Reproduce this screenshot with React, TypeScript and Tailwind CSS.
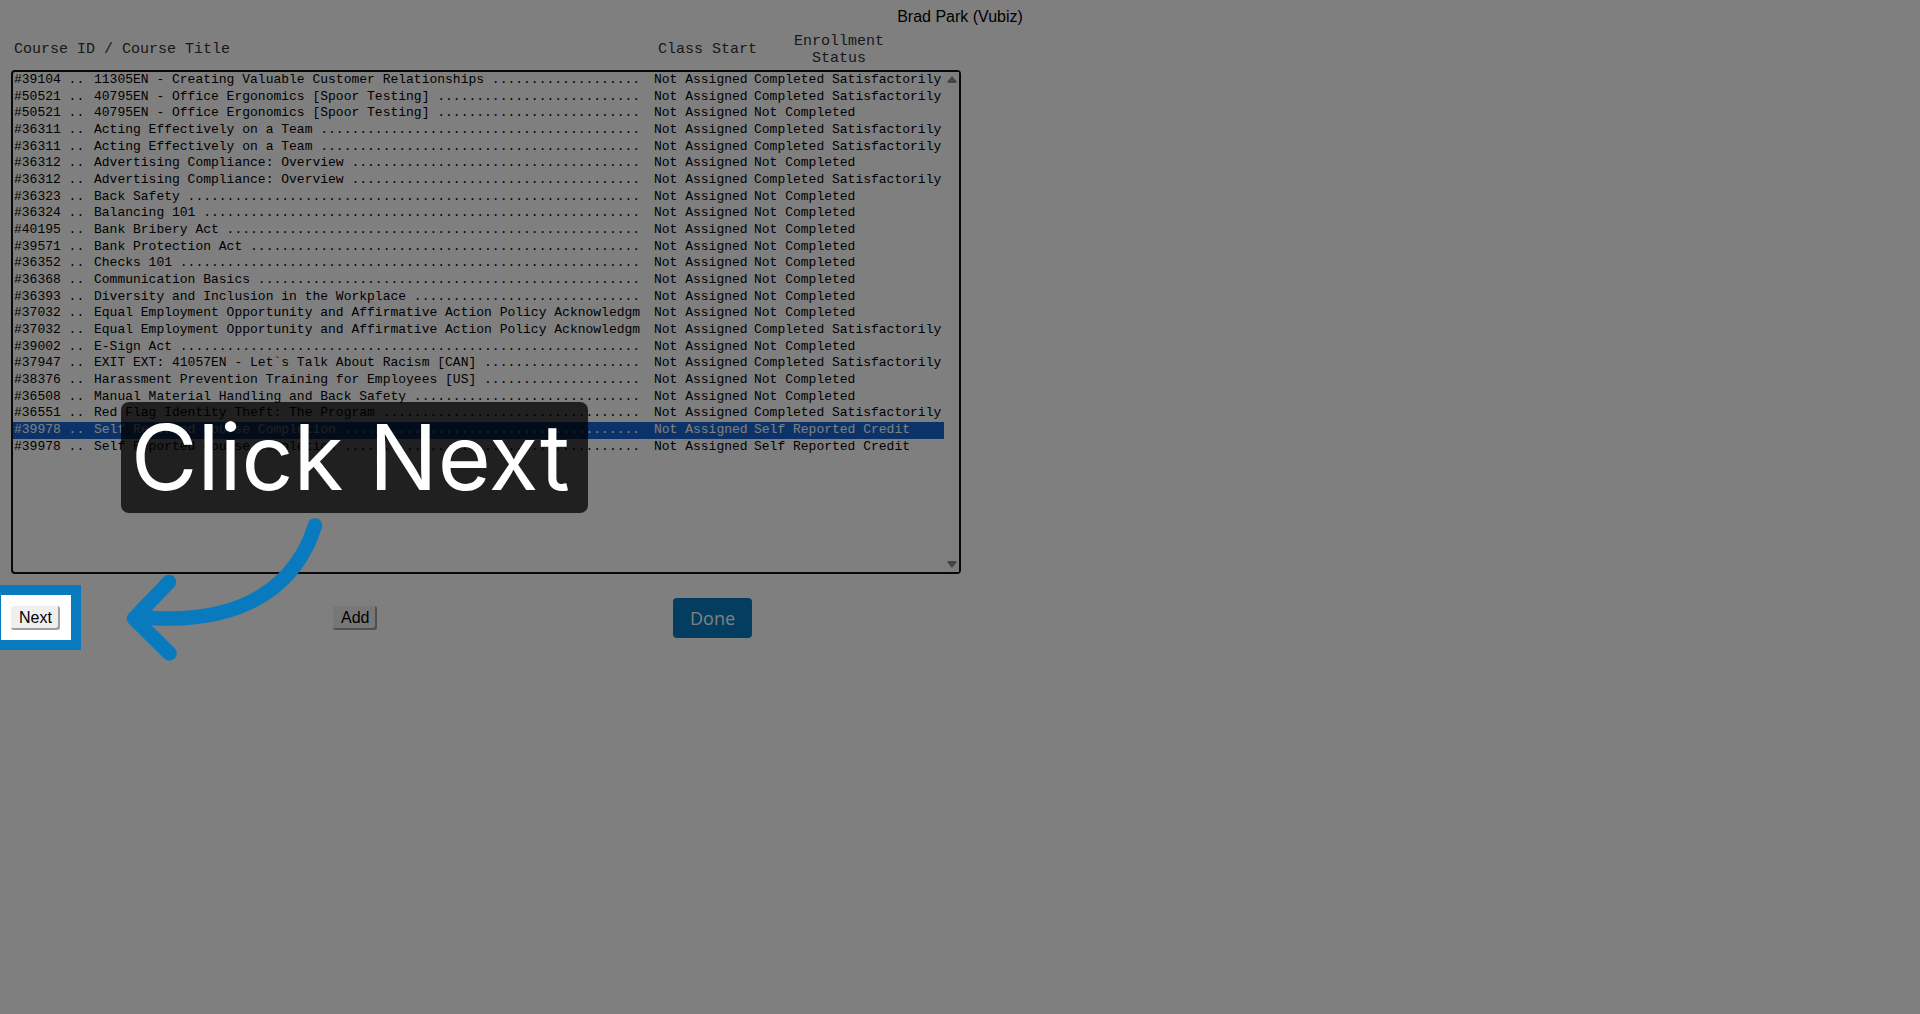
import React from 'react';

interface Course {
  id: string;
  title: string;
  status: string;
}

const DONE = 'Completed Satisfactorily';
const OPEN = 'Not Completed';
const SELF = 'Self Reported Credit';

const TITLE_WIDTH = 70;
const SELECTED_ROW = 21;

const courses: Course[] = [
  { id: '39104', title: '11305EN - Creating Valuable Customer Relationships', status: DONE },
  { id: '50521', title: '40795EN - Office Ergonomics [Spoor Testing]', status: DONE },
  { id: '50521', title: '40795EN - Office Ergonomics [Spoor Testing]', status: OPEN },
  { id: '36311', title: 'Acting Effectively on a Team', status: DONE },
  { id: '36311', title: 'Acting Effectively on a Team', status: DONE },
  { id: '36312', title: 'Advertising Compliance: Overview', status: OPEN },
  { id: '36312', title: 'Advertising Compliance: Overview', status: DONE },
  { id: '36323', title: 'Back Safety', status: OPEN },
  { id: '36324', title: 'Balancing 101', status: OPEN },
  { id: '40195', title: 'Bank Bribery Act', status: OPEN },
  { id: '39571', title: 'Bank Protection Act', status: OPEN },
  { id: '36352', title: 'Checks 101', status: OPEN },
  { id: '36368', title: 'Communication Basics', status: OPEN },
  { id: '36393', title: 'Diversity and Inclusion in the Workplace', status: OPEN },
  { id: '37032', title: 'Equal Employment Opportunity and Affirmative Action Policy Acknowledgm', status: OPEN },
  { id: '37032', title: 'Equal Employment Opportunity and Affirmative Action Policy Acknowledgm', status: DONE },
  { id: '39002', title: 'E-Sign Act', status: OPEN },
  { id: '37947', title: 'EXIT EXT: 41057EN - Let`s Talk About Racism [CAN]', status: DONE },
  { id: '38376', title: 'Harassment Prevention Training for Employees [US]', status: OPEN },
  { id: '36508', title: 'Manual Material Handling and Back Safety', status: OPEN },
  { id: '36551', title: 'Red Flag Identity Theft: The Program', status: DONE },
  { id: '39978', title: 'Self Reported Course Completion', status: SELF },
  { id: '39978', title: 'Self Reported Course Completion', status: SELF },
];

// Fill the title column with a dotted leader
const withLeader = (title: string) => `${title} `.padEnd(TITLE_WIDTH, '.').slice(0, TITLE_WIDTH);

const courseLine = ({ id, title, status }: Course) =>
  [`#${id} ..`, withLeader(title), 'Not Assigned', status].join('\t');

const CourseList: React.FC = () => (
  <div className="flex h-[504px] rounded-[4px] border-2 border-[#101010] bg-white">
    <select
      id="courses"
      size={30}
      defaultValue={SELECTED_ROW}
      className="min-w-0 flex-1 appearance-none overflow-hidden border-0 p-0 font-['Liberation_Mono',monospace] text-[13px] text-black outline-none"
    >
      {courses.map((course, i) => (
        <option
          key={i}
          value={i}
          label={courseLine(course)}
          className="min-h-0 p-0 pb-0.5 pl-px whitespace-pre [tab-size:20px] checked:bg-[#1967d2] checked:text-white nth-[3n+2]:pb-px"
        />
      ))}
    </select>
    <div className="flex w-[15px] flex-col items-center justify-between bg-[#fcfcfc] py-1 text-[#8b8b8b]">
      <svg width="10" height="7" viewBox="0 0 10 7" fill="currentColor">
        <path d="M5 0L9.4 5.2Q10 7 8.6 7H1.4Q0 7 .6 5.2Z" />
      </svg>
      <svg width="10" height="7" viewBox="0 0 10 7" fill="currentColor">
        <path d="M5 7L9.4 1.8Q10 0 8.6 0H1.4Q0 0 .6 1.8Z" />
      </svg>
    </div>
  </div>
);

const smallButton =
  'h-6 rounded-[3px] bg-[#efefef] px-2 text-base leading-6 text-black shadow-[inset_-2px_-2px_0_#a0a0a0]';

export default function App() {
  return (
    <div className="relative min-h-screen overflow-hidden bg-white font-['Liberation_Sans',Arial,sans-serif] text-black">
      <header className="pt-[5px] text-center text-base leading-6">Brad Park (Vubiz)</header>

      <main className="ml-[11px] w-[950px]">
        <div className="grid h-[41px] grid-cols-[644px_100px_162px] items-center pl-[3px] font-['Liberation_Mono',monospace] text-[15px] leading-[17px] text-[#333]">
          <label htmlFor="courses">Course ID / Course Title</label>
          <span>Class Start</span>
          <span className="text-center">
            Enrollment
            <br />
            Status
          </span>
        </div>

        <CourseList />

        <div className="mt-6 grid grid-cols-[322px_340px_auto] items-center justify-start">
          {/* Highlighted step: the ring's shadow dims the rest of the page */}
          <div className="relative flex">
            <button type="button" className={smallButton}>Next</button>
            <div className="pointer-events-none absolute -top-[21px] -left-5 z-10 h-[65px] w-[90px] border-10 border-[#0a7abf] shadow-[0_0_0_3000px_rgba(0,0,0,0.5)]"></div>
          </div>
          <div className="flex">
            <button type="button" className={smallButton}>Add</button>
          </div>
          <button
            type="button"
            className="h-10 rounded-[4px] bg-[#077dc2] px-[17px] font-['Open_Sans',sans-serif] text-lg leading-6 text-white"
          >
            Done
          </button>
        </div>
      </main>

      {/* Step callout */}
      <div className="absolute top-[402px] left-[121px] z-20 rounded-lg bg-black/75 pr-[18px] pl-2.5 font-['Inter',sans-serif] text-[91px] leading-[111px] whitespace-nowrap text-white">
        Click Next
      </div>
      <svg
        className="pointer-events-none absolute top-[510px] left-[120px] z-20"
        width="210"
        height="155"
        viewBox="120 510 210 155"
        fill="none"
        stroke="#0a7abf"
        strokeWidth="14.5"
        strokeLinecap="round"
        strokeLinejoin="round"
      >
        <path d="M315 525.500C298 580 250 624 152 618L140 618" />
        <path d="M169 582L134 618.500L169.500 653.500" />
      </svg>
    </div>
  );
}
